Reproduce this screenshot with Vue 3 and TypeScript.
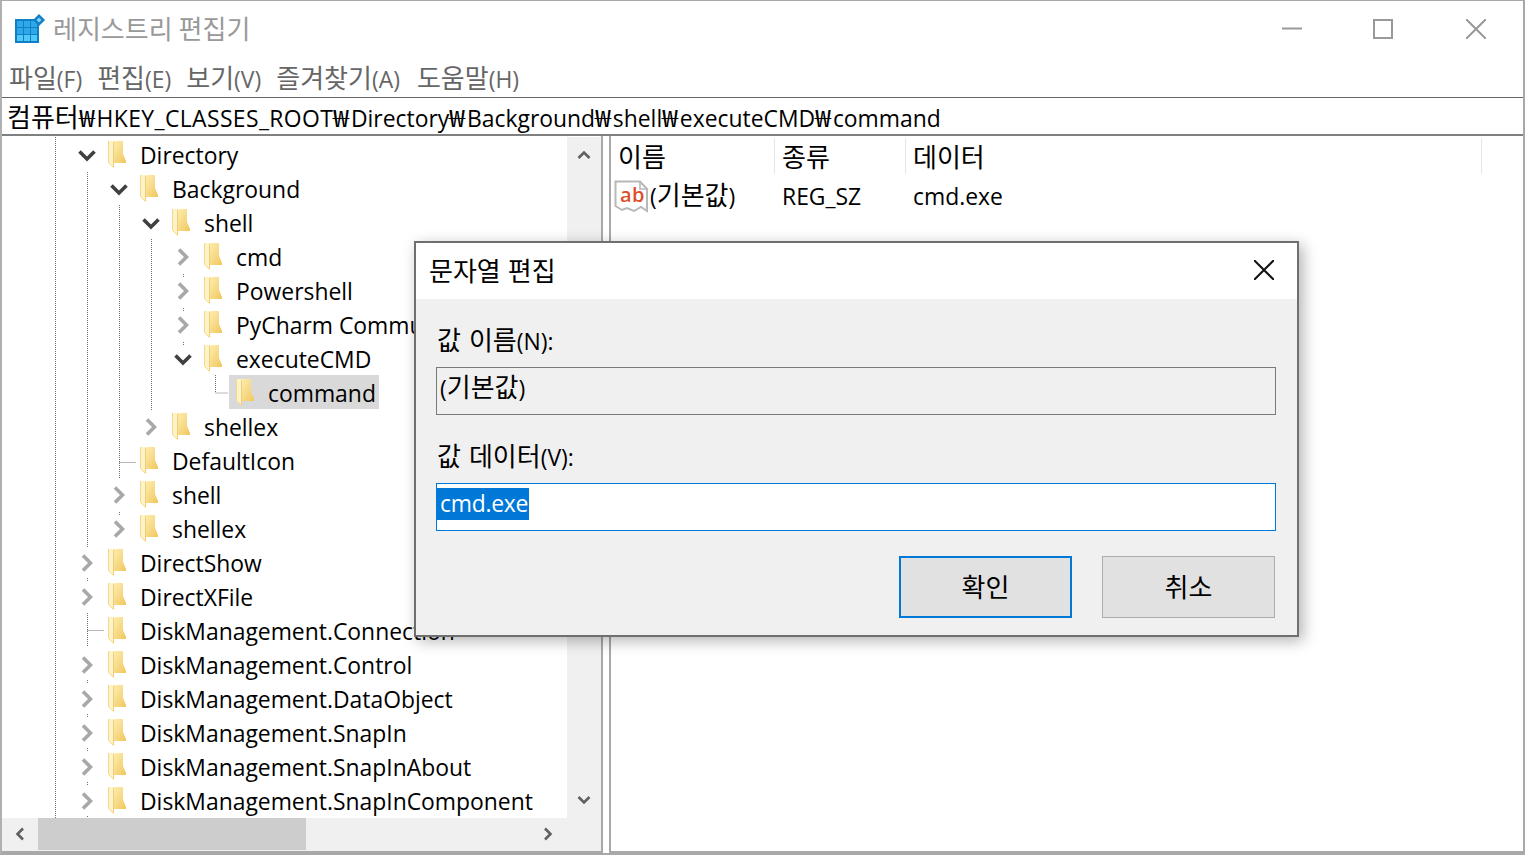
<script setup lang="ts">
interface Node { label: string; depth: number; state: 'open' | 'closed' | 'leaf'; selected?: boolean }
interface Run { text: string; kind: string }
const nodes: Node[] = [
  { label: 'Directory', depth: 0, state: 'open' },
  { label: 'Background', depth: 1, state: 'open' },
  { label: 'shell', depth: 2, state: 'open' },
  { label: 'cmd', depth: 3, state: 'closed' },
  { label: 'Powershell', depth: 3, state: 'closed' },
  { label: 'PyCharm Community', depth: 3, state: 'closed' },
  { label: 'executeCMD', depth: 3, state: 'open' },
  { label: 'command', depth: 4, state: 'leaf', selected: true },
  { label: 'shellex', depth: 2, state: 'closed' },
  { label: 'DefaultIcon', depth: 1, state: 'leaf' },
  { label: 'shell', depth: 1, state: 'closed' },
  { label: 'shellex', depth: 1, state: 'closed' },
  { label: 'DirectShow', depth: 0, state: 'closed' },
  { label: 'DirectXFile', depth: 0, state: 'closed' },
  { label: 'DiskManagement.Connection', depth: 0, state: 'leaf' },
  { label: 'DiskManagement.Control', depth: 0, state: 'closed' },
  { label: 'DiskManagement.DataObject', depth: 0, state: 'closed' },
  { label: 'DiskManagement.SnapIn', depth: 0, state: 'closed' },
  { label: 'DiskManagement.SnapInAbout', depth: 0, state: 'closed' },
  { label: 'DiskManagement.SnapInComponent', depth: 0, state: 'closed' },
]
const menus = ['파일(F)', '편집(E)', '보기(V)', '즐겨찾기(A)', '도움말(H)']
const guides = [
  'M55.5 0V682',
  'M87.5 35V410M87.5 441V445M87.5 476V510M87.5 543V547M87.5 577V581M87.5 611V615M87.5 645V649M87.5 679V682',
  'M119.5 68V342M119.5 375V379',
  'M151.5 102V273',
  'M183.5 137V141M183.5 171V175M183.5 205V209',
  'M215.5 238V256H228',
  'M119.5 325.500H136',
  'M87.5 493.500H104',
]
function runs(text: string): Run[] {
  return text
    .split(/([\uAC00-\uD7A3]+|₩)/)
    .filter((t) => t.length > 0)
    .map((t) => ({ text: t, kind: t === '₩' ? 'won' : /[\uAC00-\uD7A3]/.test(t) ? 'ko' : 'la' }))
}
const address = '컴퓨터₩HKEY_CLASSES_ROOT₩Directory₩Background₩shell₩executeCMD₩command'
</script>

<template>
  <div class="window">
    <div class="titlebar">
      <svg class="appicon" width="32" height="32" viewBox="0 0 32 32">
        <rect x="1" y="6" width="24" height="24" fill="#0f80c8" />
        <g fill="#2fa8e8">
          <rect x="3" y="8" width="6" height="6" /><rect x="10" y="8" width="6" height="6" /><rect x="17" y="8" width="6" height="6" />
          <rect x="3" y="15" width="6" height="6" /><rect x="10" y="15" width="6" height="6" /><rect x="17" y="15" width="6" height="6" />
        </g>
        <g fill="#52c8f8">
          <rect x="3" y="22" width="6" height="6" /><rect x="10" y="22" width="6" height="6" /><rect x="17" y="22" width="6" height="6" />
        </g>
        <path d="M25 1l6 6-6 6-6-6z" fill="#0f80c8" />
        <path d="M25 4.500l2.500 2.500-2.500 2.500-2.500-2.500z" fill="#7fd0f5" />
      </svg>
      <span class="title"><span v-for="(r, i) in runs('레지스트리 편집기')" :key="i" :class="r.kind">{{ r.text }}</span></span>
      <div class="caption">
        <svg width="20" height="20" viewBox="0 0 20 20"><path d="M0 9.500H20" stroke="#999" stroke-width="2" /></svg>
        <svg width="20" height="20" viewBox="0 0 20 20"><rect x="1" y="1" width="18" height="18" fill="none" stroke="#999" stroke-width="2" /></svg>
        <svg width="20" height="20" viewBox="0 0 20 20"><path d="M0 0L20 20M20 0L0 20" stroke="#999" stroke-width="2" /></svg>
      </div>
    </div>
    <div class="menubar">
      <span v-for="m in menus" :key="m"><span v-for="(r, i) in runs(m)" :key="i" :class="r.kind">{{ r.text }}</span></span>
    </div>
    <div class="address"><span v-for="(r, i) in runs(address)" :key="i" :class="r.kind">{{ r.text }}</span></div>
    <div class="panes">
      <div class="treepane">
        <div class="treemain">
          <div class="tree">
            <svg class="guides" width="565" height="682" viewBox="0 0 565 682">
              <path v-for="g in guides" :key="g" :d="g" fill="none" stroke="#707070" stroke-dasharray="1 1" transform="translate(-2 0)" />
            </svg>
            <div v-for="(n, i) in nodes" :key="i" class="row" :style="{ paddingLeft: 69 + n.depth * 32 + 'px' }">
              <span class="chev">
                <svg v-if="n.state === 'open'" width="18" height="13" viewBox="0 0 18 13"><path d="M1.500 2.500L9 10 16.500 2.500" fill="none" stroke="#404040" stroke-width="3.600" /></svg>
                <svg v-else-if="n.state === 'closed'" width="12" height="18" viewBox="0 0 12 18"><path d="M2 1.500L9.500 9 2 16.500" fill="none" stroke="#a8a8a8" stroke-width="3.600" /></svg>
              </span>
              <span class="node" :class="{ selected: n.selected }">
                <svg class="folder" width="18" height="27" viewBox="0 0 18 27">
                  <defs>
                    <linearGradient id="fb" x1="0" y1="0" x2="1" y2="1">
                      <stop offset="0" stop-color="#fdeeb5" />
                      <stop offset="1" stop-color="#f2c75c" />
                    </linearGradient>
                  </defs>
                  <path d="M5 0H15V13L18 20V22H5Z" fill="url(#fb)" />
                  <path d="M0 0H5.500V26.500L0 21.500Z" fill="#fef2c8" />
                  <path d="M0.500 0V21.500L5.500 26.500" fill="none" stroke="#f5d88c" />
                  <path d="M5.500 1V26" fill="none" stroke="#f0cf7a" />
                </svg>
                <span class="label">{{ n.label }}</span>
              </span>
            </div>
          </div>
          <div class="vscroll">
            <svg width="14" height="10" viewBox="0 0 14 10"><path d="M1.500 8L7 2.500 12.500 8" fill="none" stroke="#606060" stroke-width="2.600" /></svg>
            <svg width="14" height="10" viewBox="0 0 14 10"><path d="M1.500 2L7 7.500 12.500 2" fill="none" stroke="#606060" stroke-width="2.600" /></svg>
          </div>
        </div>
        <div class="hscroll">
          <svg width="10" height="14" viewBox="0 0 10 14"><path d="M8 1.500L2.500 7 8 12.500" fill="none" stroke="#606060" stroke-width="2.600" /></svg>
          <div class="thumb"></div>
          <svg width="10" height="14" viewBox="0 0 10 14"><path d="M2 1.500L7.500 7 2 12.500" fill="none" stroke="#606060" stroke-width="2.600" /></svg>
        </div>
      </div>
      <div class="listpane">
        <div class="listhead">
          <span class="c1 ko">이름</span><span class="c2 ko">종류</span><span class="c3 ko">데이터</span><span class="c4"></span>
        </div>
        <div class="listrow">
          <span class="c1 named">
            <svg width="34" height="33" viewBox="0 0 34 33">
              <path d="M1.500 1.500H26L33 9V31L27 27 20 31 13 28 8 30 1.500 26Z" fill="#fff" stroke="#b8b8b8" stroke-width="2" />
              <path d="M26 1.500V9H33" fill="none" stroke="#b8b8b8" stroke-width="1.600" />
              <text x="6" y="22" class="ab">ab</text>
            </svg>
            <span class="defval"><span v-for="(r, i) in runs('(기본값)')" :key="i" :class="r.kind">{{ r.text }}</span></span>
          </span>
          <span class="c2">REG_SZ</span>
          <span class="c3">cmd.exe</span>
        </div>
      </div>
    </div>

    <div class="dialog">
      <div class="dlgtitle">
        <span><span v-for="(r, i) in runs('문자열 편집')" :key="i" :class="r.kind">{{ r.text }}</span></span>
        <svg width="20" height="20" viewBox="0 0 20 20"><path d="M0 0L20 20M20 0L0 20" stroke="#111" stroke-width="2" /></svg>
      </div>
      <div class="dlgbody">
        <div class="fieldlabel"><span v-for="(r, i) in runs('값 이름(N):')" :key="i" :class="r.kind">{{ r.text }}</span></div>
        <div class="field readonly"><span v-for="(r, i) in runs('(기본값)')" :key="i" :class="r.kind">{{ r.text }}</span></div>
        <div class="fieldlabel second"><span v-for="(r, i) in runs('값 데이터(V):')" :key="i" :class="r.kind">{{ r.text }}</span></div>
        <div class="field active"><span class="sel">cmd.exe</span></div>
        <div class="buttons">
          <div class="btn primary ko">확인</div>
          <div class="btn ko">취소</div>
        </div>
      </div>
    </div>
  </div>
</template>

<style>
html, body { margin: 0; padding: 0; background: #fff; overflow: hidden; }
</style>

<style scoped>
.window {
  position: relative;
  width: 1525px;
  height: 855px;
  box-sizing: border-box;
  border-top: 1px solid #a8a8a8;
  border-left: 2px solid #b0b0b0;
  border-right: 2px solid #a8a8a8;
  border-bottom: 2px solid #a8a8a8;
  background: #fff;
  overflow: hidden;
  font-family: "Open Sans", "Noto Sans CJK KR", sans-serif;
  font-size: 22.9px;
  color: #000;
  display: flex;
  flex-direction: column;
}
.ko { font-family: "Noto Sans CJK KR", sans-serif; font-size: 26px; }
.won {
  font-family: "Noto Sans CJK KR", sans-serif;
  font-size: 24px;
  display: inline-block;
  width: 17.7px;
  transform: scaleX(1.2);
  transform-origin: left center;
}
.titlebar {
  height: 56px;
  display: flex;
  align-items: center;
  padding-left: 12px;
  flex: none;
}
.appicon { margin-right: 7px; }
.title { color: #999; position: relative; top: -2px; }
.caption {
  margin-left: auto;
  display: flex;
  gap: 71px;
  padding-right: 37px;
}
.caption svg:last-child { margin-left: 2px; }
.menubar {
  height: 38px;
  padding-bottom: 2px;
  flex: none;
  display: flex;
  align-items: center;
  gap: 15px;
  padding-left: 7px;
  color: #666;
}
.menubar > span:last-child { margin-left: 2px; }
.address {
  height: 36px;
  flex: none;
  border-top: 1px solid #646464;
  border-bottom: 2px solid #808080;
  line-height: 36px;
  padding-left: 5px;
  white-space: nowrap;
  overflow: hidden;
}
.address .la:nth-child(3) { letter-spacing: 0.4px; }
.panes {
  flex: 1;
  display: flex;
  min-height: 0;
}
.treepane {
  width: 599px;
  flex: none;
  display: flex;
  flex-direction: column;
  border-right: 2px solid #a8a8a8;
  border-bottom: 2px solid #a8a8a8;
}
.treemain {
  flex: 1;
  display: flex;
  min-height: 0;
  padding-top: 1px;
}
.tree {
  position: relative;
  flex: 1;
  overflow: hidden;
  min-width: 0;
}
.guides { position: absolute; left: 0; top: 0; }
.row {
  position: relative;
  height: 34px;
  display: flex;
  align-items: center;
  white-space: nowrap;
}
.chev {
  width: 32px;
  display: flex;
  justify-content: center;
  align-items: center;
  flex: none;
  position: relative;
  top: 1px;
}
.node {
  display: flex;
  align-items: center;
  height: 34px;
  margin-left: -2px;
  padding: 0 3px 0 7px;
  gap: 14px;
  flex: none;
}
.label { position: relative; top: 1px; }
.node.selected { background: #d9d9d9; }
.folder { flex: none; }
.vscroll {
  width: 34px;
  flex: none;
  background: #f0f0f0;
  display: flex;
  flex-direction: column;
  justify-content: space-between;
  align-items: center;
  padding: 13px 1px 13px 0;
  box-sizing: border-box;
}
.hscroll {
  height: 33px;
  flex: none;
  background: #f0f0f0;
  display: flex;
  align-items: flex-start;
  padding-left: 13px;
}
.hscroll svg { margin-top: 9px; }
.thumb {
  width: 268px;
  height: 32px;
  background: #cdcdcd;
  margin-left: 13px;
  margin-right: 237px;
}
.listpane {
  flex: 1;
  margin-left: 6px;
  border-left: 2px solid #a8a8a8;
  border-bottom: 2px solid #a8a8a8;
}
.listhead {
  height: 40px;
  display: flex;
  align-items: center;
}
.listhead span { height: 36px; line-height: 36px; border-right: 1px solid #e5e5e5; box-sizing: border-box; padding-left: 7px; }
.c1 { width: 164px; flex: none; box-sizing: border-box; }
.c2 { width: 131px; flex: none; box-sizing: border-box; }
.c3 { width: 576px; flex: none; box-sizing: border-box; }
.listhead .c4 { flex: 1; border-right: 0; }
.listrow { display: flex; align-items: center; height: 40px; }
.listrow > span { padding-left: 7px; }
.listrow > .named { display: flex; align-items: center; padding-left: 3px; }
.defval { line-height: 32px; position: relative; top: -1px; margin-left: 2px; }
.ab { font-family: "Open Sans", sans-serif; font-size: 20px; font-weight: 600; fill: #dc4f2b; letter-spacing: 0.5px; }
.dialog {
  position: absolute;
  left: 412px;
  top: 240px;
  width: 885px;
  height: 396px;
  box-sizing: border-box;
  border: 2px solid #6f6f6f;
  box-shadow: 4px 4px 14px rgba(0, 0, 0, 0.3);
  background: #f0f0f0;
  display: flex;
  flex-direction: column;
}
.dlgtitle {
  height: 56px;
  flex: none;
  background: #fff;
  display: flex;
  align-items: center;
  justify-content: space-between;
  padding: 0 23px 0 13px;
}
.dlgtitle > span { position: relative; top: -2px; word-spacing: 1px; }
.dlgtitle svg { position: relative; top: -1px; }
.dlgbody { flex: 1; padding: 22px 21px 0 20px; }
.fieldlabel { height: 46px; line-height: 35px; padding-left: 1px; word-spacing: 2px; color: #000; }
.fieldlabel.second { margin-top: 22px; }
.field {
  height: 48px;
  box-sizing: border-box;
  border: 1px solid #7a7a7a;
  line-height: 35px;
  padding-left: 3px;
}
.field.active {
  background: #fff;
  border-color: #0078d7;
  padding-left: 0;
  display: flex;
  align-items: flex-start;
}
.sel {
  background: #0078d7;
  color: #fff;
  height: 32px;
  line-height: 31px;
  margin-top: 4px;
  padding: 0 1px 0 3px;
  letter-spacing: -0.25px;
  display: block;
}
.buttons {
  display: flex;
  justify-content: flex-end;
  gap: 30px;
  margin-top: 25px;
  padding-right: 1px;
}
.btn {
  width: 173px;
  height: 62px;
  box-sizing: border-box;
  border: 1px solid #adadad;
  background: #e1e1e1;
  display: flex;
  align-items: center;
  justify-content: center;
  padding-bottom: 3px;
}
.btn.primary { border: 2px solid #0078d7; }
</style>
